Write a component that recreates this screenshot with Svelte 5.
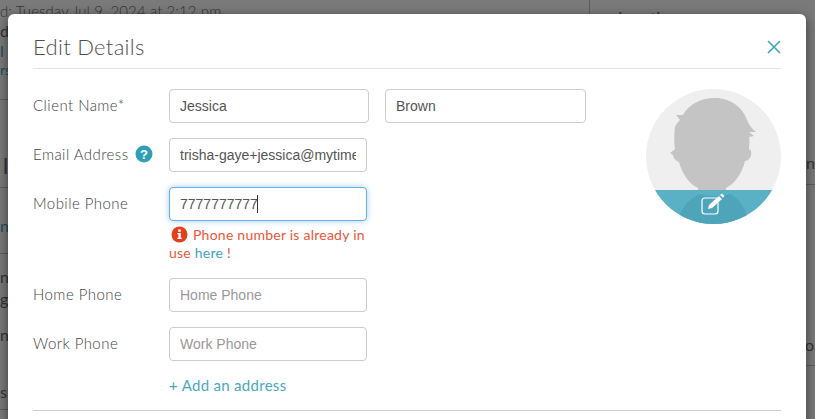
<script>
  let mobile = $state('7777777777');
  let first = $state('Jessica');
  let last = $state('Brown');
  let email = $state('trisha-gaye+jessica@mytime.com');
</script>

<div class="page">
  <div class="behind">
    <p class="b-date">d: Tuesday Jul 9, 2024 at 2:12 pm</p>
    <p class="b-a">d</p>
    <p class="b-a link">l</p>
    <p class="b-a small link">rs</p>
    <div class="b-rule r1"></div>
    <p class="b-big">l</p>
    <div class="b-rule r2"></div>
    <p class="b-a link na">na</p>
    <div class="b-rule r3"></div>
    <p class="b-a n1">n</p>
    <p class="b-a n2">g</p>
    <p class="b-a n3">nt</p>
    <p class="b-a n4">s:</p>
    <div class="b-rule r4"></div>
    <div class="b-vert"></div>
    <p class="b-right top">Location</p>
    <p class="b-right n5">n</p>
    <p class="b-right n6">or</p>
    <div class="b-rule-right r5"></div>
    <div class="b-rule-right r6"></div>
  </div>

  <div class="modal">
    <header>
      <h2>Edit Details</h2>
      <button class="close" aria-label="Close">
        <svg width="14" height="14" viewBox="0 0 14 14"><path d="M1 1l12 12M13 1L1 13" stroke="#3fa5ba" stroke-width="1.6" fill="none" /></svg>
      </button>
    </header>

    <div class="body">
      <div class="form">
        <div class="row">
          <span class="label">Client Name*</span>
          <input class="wide" bind:value={first} />
          <input class="wide" bind:value={last} />
        </div>
        <div class="row">
          <span class="label">Email Address
            <svg class="help" width="18" height="18" viewBox="0 0 18 18">
              <circle cx="9" cy="9" r="8.5" fill="#2f9fb8" />
              <text x="9" y="13.5" text-anchor="middle">?</text>
            </svg>
          </span>
          <input bind:value={email} />
        </div>
        <div class="row tight">
          <span class="label">Mobile Phone</span>
          <div class="focus-wrap">
            <input class="focus" bind:value={mobile} />
            <i class="caret"></i>
          </div>
        </div>
        <div class="error">
          <svg width="17" height="17" viewBox="0 0 17 17">
            <circle cx="8.5" cy="8.5" r="8" fill="#e2401c" />
            <rect x="7.2" y="3.4" width="2.6" height="2.4" fill="#fff" />
            <path d="M6.4 7h3.4v4.8h1v1.3H6.4v-1.3h1v-3.5h-1z" fill="#fff" />
          </svg>
          <span class="msg">Phone number is already in use <a href="#here">here</a> !</span>
        </div>
        <div class="row">
          <span class="label">Home Phone</span>
          <input placeholder="Home Phone" />
        </div>
        <div class="row">
          <span class="label">Work Phone</span>
          <input placeholder="Work Phone" />
        </div>
        <a class="add" href="#add">+ Add an address</a>
      </div>

      <div class="avatar">
        <svg width="135" height="135" viewBox="0 0 135 135">
          <defs>
            <clipPath id="round"><circle cx="67.5" cy="67.5" r="67.5" /></clipPath>
          </defs>
          <g clip-path="url(#round)">
            <rect width="135" height="135" fill="#efefef" />
            <path d="M69 9C85 9 97 19 101 31 103 36 106 40 110 43L103 43 108 47 103 48C104 53 103 58 103 60 106 61 106 67 103 70 102 71 101 72 99 72 96 85 88 95 80 99V104H52V99C42 94 36 84 33 73 30 72 27 69 27 66L24 64 29 60C28 55 28 45 29 38 30 35 32 33 34 31L30 26 37 26C43 15 55 9 69 9z" fill="#c5c4c5" />
            <rect y="101" width="135" height="34" fill="#5ab1c5" />
            <path d="M31 135C33 121 42 110 54 105 62 108 76 108 84 105 94 110 101 121 103 135z" fill="#4ea5ba" />
          </g>
          <path d="M71 109H59a3 3 0 0 0-3 3v10a3 3 0 0 0 3 3h10a3 3 0 0 0 3-3v-9" fill="none" stroke="#fff" stroke-width="1.2" stroke-linecap="round" />
          <path d="M62 120l1-4 10-9 3 3-10 9zM74 106l2-1.600 2.500 2.600-1.600 1.800z" fill="#fff" />
        </svg>
      </div>
    </div>

    <div class="foot-rule"></div>
  </div>
</div>

<style>
  :global(body) { margin: 0; }
  .page { position: relative; width: 815px; height: 419px; overflow: hidden;
    background: #7a7a7a; font-family: Lato, "Open Sans", sans-serif; }
  .behind { position: absolute; inset: 0; color: #333; }
  .behind p { position: absolute; margin: 0; font-size: 16px; line-height: 20px; }
  .behind .b-date { left: 0; top: 1px; white-space: nowrap; font-size: 15px; font-weight: 300; letter-spacing: 0.1px; }
  .b-a { left: 0; top: 21px; }
  .b-a.link { top: 41px; color: #1f4f5c; }
  .b-a.small { top: 60px; font-size: 14px; }
  .b-big { left: 3px; top: 156px; font-size: 22px !important; }
  .b-a.na { top: 216px; }
  .b-a.n1 { top: 267px; }
  .b-a.n2 { top: 289px; }
  .b-a.n3 { top: 325px; }
  .b-a.n4 { top: 382px; }
  .b-rule { position: absolute; left: 0; width: 8px; height: 1px; background: #5d5d5d; }
  .r1 { top: 99px; }
  .r2 { top: 187px; }
  .r3 { top: 253px; }
  .r4 { top: 409px; }
  .b-vert { position: absolute; left: 589px; top: 0; width: 1px; height: 14px; background: #5d5d5d; }
  .b-right { left: 618px; white-space: nowrap; }
  .b-right.top { top: 7px; }
  .b-right.n5 { left: 806px; top: 153px; }
  .b-right.n6 { left: 805px; top: 335px; }
  .b-rule-right { position: absolute; left: 806px; width: 9px; height: 1px; background: #5d5d5d; }
  .r5 { top: 184px; }
  .r6 { top: 365px; }

  .modal { position: absolute; left: 8px; top: 14px; width: 798px; height: 440px;
    box-sizing: border-box; padding: 0 25px; background: #fff; border-radius: 6px;
    box-shadow: 0 3px 12px rgba(0, 0, 0, 0.55); }
  header { display: flex; align-items: center; justify-content: space-between;
    height: 54px; border-bottom: 1px solid #e3e3e3; }
  h2 { margin: 10px 0 0; font-size: 22px; font-weight: 300; color: #4f4f4f; letter-spacing: 0.3px; }
  .close { display: flex; border: 0; padding: 0; background: none; margin: 11px 0 0; }
  .body { display: flex; justify-content: space-between; }
  .form { padding-top: 20px; }
  .avatar { margin: 20px 0 0; }
  .row { display: flex; gap: 16px; margin-bottom: 15px; }
  .row.tight { margin-bottom: 0; }
  .label { display: flex; align-items: center; gap: 6px; width: 120px; height: 31px;
    flex: none; font-size: 15px; font-weight: 300; letter-spacing: 0.45px; color: #444;
    white-space: nowrap; }
  .help text { font: bold 13px "Liberation Sans", sans-serif; fill: #fff; letter-spacing: 0; }
  input { width: 198px; height: 34px; box-sizing: border-box; padding: 0 10px;
    border: 1px solid #ccc; border-radius: 4px; font: 14px "Liberation Sans", Arial, sans-serif;
    color: #555; outline: none; background: #fff; }
  input::placeholder { color: #999; opacity: 1; }
  input.wide { width: 200px; }
  input.wide + input.wide { width: 201px; }
  .focus-wrap { position: relative; }
  input.focus { border-color: #66afe9; box-shadow: 0 0 6px rgba(102, 175, 233, 0.6); }
  .caret { position: absolute; left: 88px; top: 8px; width: 1px; height: 18px; background: #333; }
  .error { position: relative; width: 200px; margin: 5px 0 16px 136px; font-size: 14px;
    letter-spacing: 0.24px; line-height: 18px; color: #e8573b; }
  .error svg { position: absolute; left: 2px; top: 0; }
  .msg { display: block; text-indent: 24px; }
  .msg a { color: #3fa5ba; text-decoration: none; }
  .add { display: block; margin: -1px 0 0 136px; font-size: 15px;
    letter-spacing: 0.3px; line-height: 20px; color: #4aa9bd; text-decoration: none; }
  .foot-rule { position: absolute; left: 25px; right: 25px; top: 396px; height: 1px; background: #ccc; }
</style>
